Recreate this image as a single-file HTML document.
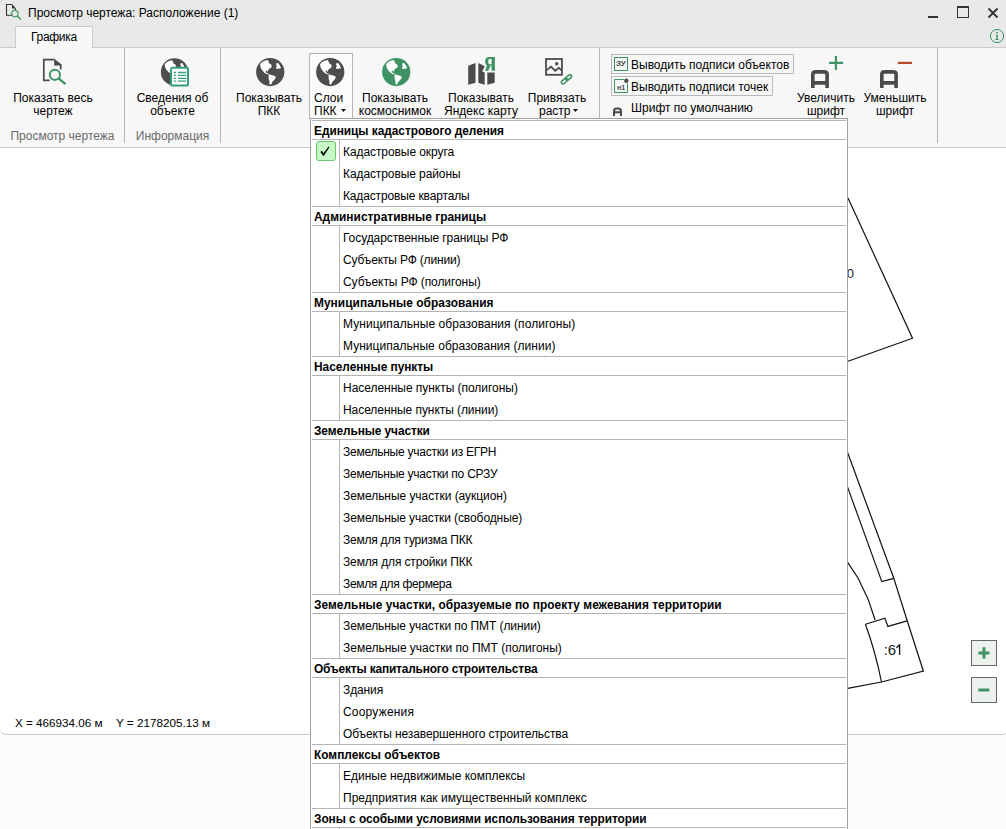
<!DOCTYPE html>
<html><head><meta charset="utf-8">
<style>
*{margin:0;padding:0;box-sizing:border-box}
html,body{width:1006px;height:829px;overflow:hidden;background:#fcfcfc;font-family:"Liberation Sans",sans-serif;color:#000;position:relative}
.a{position:absolute;white-space:nowrap}
#title{position:absolute;left:0;top:0;width:1006px;height:47px;background:#e9e9e9}
#ribbon{position:absolute;left:0;top:47px;width:1006px;height:101px;background:#f7f7f7;border-top:1px solid #cacaca;border-bottom:1px solid #cacaca}
#canvas{position:absolute;left:0;top:148px;width:1008px;height:587px;background:#fff;border-bottom:1px solid #c8c8c8;border-radius:0 0 6px 6px}
.t12{font-size:12px;line-height:13px}
.vsep{position:absolute;width:1px;background:#b2b4ba}
.c{text-align:center}
.grp{color:#6a6a6a}
.tri{width:0;height:0;border-left:2.5px solid transparent;border-right:2.5px solid transparent;border-top:3px solid #111}
#menu{position:absolute;left:310px;top:118px;width:538px;height:720px;background:#fff;border:1px solid #a0a0a0;overflow:hidden}
#menu .sep{position:absolute;left:312px;width:534px;height:1px;background:#b4b4b4}
#menu .col{position:absolute;left:339px;width:1px;background:#b4b4b4}
#menu .hd{left:314px;height:18px;line-height:20px;font-weight:bold;font-size:11.9px}
#menu .it{left:343px;height:22px;line-height:24px;font-size:12px}
</style></head><body>
<div id="title">
  <svg class="a" style="left:0;top:0" width="25" height="25" viewBox="0 0 25 25">
    <path d="M0 0 H2.5 Q0.5 0.5 0 2.5 Z" fill="#fff"/>
    <path d="M0.3 3 Q0.6 0.6 3 0.3" stroke="#d0d0d0" fill="none" stroke-width="1"/>
    <path d="M12.7 15.2 H6.5 V4.5 H12.3" fill="none" stroke="#333" stroke-width="1.1"/>
    <path d="M12 4 L15.9 8.4 H12 Z" fill="#333"/>
    <path d="M15.4 8.3 V10" fill="none" stroke="#333" stroke-width="1.1"/>
    <circle cx="14.9" cy="13.6" r="3.2" fill="none" stroke="#3d9a63" stroke-width="1.2"/>
    <path d="M17.2 16 L20.9 19.5" stroke="#3d9a63" stroke-width="1.4"/>
  </svg>
  <div class="a t12" style="left:28px;top:7px">Просмотр чертежа: Расположение (1)</div>
  <div class="a" style="left:928px;top:16px;width:10px;height:2px;background:#333"></div>
  <div class="a" style="left:957px;top:6px;width:12px;height:12px;border:1px solid #333;border-top-width:2px"></div>
  <svg class="a" style="left:987px;top:7px" width="12" height="12" viewBox="0 0 12 12"><path d="M1.5 1.5 L10.5 10.5 M10.5 1.5 L1.5 10.5" stroke="#333" stroke-width="1.8"/></svg>
  <svg class="a" style="left:989px;top:28px" width="16" height="16" viewBox="0 0 16 16"><circle cx="8" cy="8" r="6.6" fill="none" stroke="#3a9160" stroke-width="1"/><circle cx="8" cy="4.6" r="0.95" fill="#3a9160"/><path d="M6.8 6.6 H8.7 V11 H9.6 V11.9 H6.4 V11 H7.3 V7.4 H6.8 Z" fill="#3a9160"/></svg>
</div>
<div id="ribbon">
  <div class="vsep" style="left:124px;top:0;height:95px"></div>
  <div class="vsep" style="left:220px;top:0;height:95px"></div>
  <div class="vsep" style="left:599px;top:0;height:95px"></div>
  <div class="vsep" style="left:937px;top:0;height:95px"></div>
  <!-- Показать весь чертеж -->
  <svg class="a" style="left:36px;top:6px" width="36" height="36" viewBox="0 0 36 36">
    <path d="M13.7 26.3 H7.8 V5.6 H18.5" fill="none" stroke="#4a4a4a" stroke-width="1.7"/>
    <path d="M18.2 4.8 L25.6 10.6 V11.5 H18.2 Z" fill="#4a4a4a"/>
    <path d="M24.7 10.5 V15.4" fill="none" stroke="#4a4a4a" stroke-width="1.7"/>
    <circle cx="18.9" cy="20.8" r="5.1" fill="none" stroke="#3f9264" stroke-width="2"/>
    <path d="M22.6 24.3 L29.5 30.2" stroke="#3f9264" stroke-width="2.3"/>
  </svg>
  <div class="a t12 c" style="left:-3px;width:112px;top:44px">Показать весь<br>чертеж</div>
  <div class="a t12 c grp" style="left:2px;width:121px;top:82px">Просмотр чертежа</div>
  <!-- Сведения об объекте -->
  <svg class="a" style="left:156px;top:6px" width="36" height="36" viewBox="0 0 829 829">
    <g transform="translate(20 10) scale(0.97)"><use href="#globe"/></g>
  </svg>
  <svg class="a" style="left:156px;top:6px" width="36" height="36" viewBox="0 0 36 36">
    <rect x="15.1" y="13.8" width="16.9" height="17.8" rx="1.2" fill="#fff" stroke="#33a077" stroke-width="2"/>
    <path d="M17.8 18.5 H19.9 M21.9 18.5 H30.2 M17.8 21.4 H19.9 M21.9 21.4 H30.2 M17.8 24.3 H19.9 M21.9 24.3 H30.2 M17.8 27.2 H19.9 M21.9 27.2 H30.2" stroke="#33a077" stroke-width="1.3"/>
  </svg>
  <div class="a t12 c" style="left:124px;width:97px;top:44px">Сведения об<br>объекте</div>
  <div class="a t12 c grp" style="left:124px;width:97px;top:82px">Информация</div>
  <!-- Показывать ПКК -->
  <svg class="a" style="left:252px;top:6px" width="36" height="36" viewBox="0 0 829 829"><use href="#globe"/></svg>
  <div class="a t12 c" style="left:223px;width:92px;top:44px">Показывать<br>ПКК</div>
  <!-- Слои ПКК -->
  <div class="a" style="left:309px;top:5px;width:44px;height:66px;border:1px solid #b2b5be;background:#fbfbfb"></div>
  <svg class="a" style="left:312px;top:6px" width="36" height="36" viewBox="0 0 829 829"><use href="#globe"/></svg>
  <div class="a t12" style="left:314px;top:44px">Слои<br>ПКК</div>
  <svg class="a" style="left:341px;top:61px" width="5" height="3"><path d="M0 0 H5 L2.5 3 Z" fill="#111"/></svg>
  <!-- космоснимок -->
  <svg class="a" style="left:378px;top:6px" width="36" height="36" viewBox="0 0 829 829"><use href="#globeg"/></svg>
  <div class="a t12 c" style="left:349px;width:92px;top:44px">Показывать<br>космоснимок</div>
  <!-- Яндекс -->
  <svg class="a" style="left:456px;top:6px" width="44" height="36" viewBox="0 0 44 36">
    <path d="M12.2 11.8 L19.5 9 V28.7 L12.2 30.8 Z" fill="#4a4a4a"/>
    <path d="M22.3 9 L28.7 12.2 L26.2 17.5 L28.7 18.4 V30.8 L22.3 28.7 Z" fill="#4a4a4a"/>
    <path d="M31.3 18.6 L38.7 18.4 V28.7 L31.3 30.8 Z" fill="#4a4a4a"/>
    <path fill="#3f9264" d="M35.6 3.1 H38.9 V16.8 H35.6 Z M35.6 3.1 H33.2 C30.6 3.1 29.1 4.8 29.1 7.4 C29.1 10 30.6 11.8 33.2 11.8 H35.6 V10.3 H33.6 C32.7 10.3 32.3 9.2 32.3 7.4 C32.3 5.8 32.7 5 33.6 5 H35.6 Z M31 11.3 L34.6 11.6 L32.3 16.8 L29.1 16.8 Z"/>
  </svg>
  <div class="a t12 c" style="left:436px;width:90px;top:44px">Показывать<br>Яндекс карту</div>
  <!-- Привязать растр -->
  <svg class="a" style="left:540px;top:6px" width="40" height="36" viewBox="0 0 40 36">
    <rect x="6" y="5" width="15.9" height="15.8" fill="none" stroke="#4a4a4a" stroke-width="1.8"/>
    <path d="M6.9 16.1 L10.9 12.6 L15.2 16.7 L18.7 13.9 L21.3 16.1" fill="none" stroke="#4a4a4a" stroke-width="1.8"/>
    <circle cx="16.7" cy="9.8" r="1.7" fill="#4a4a4a"/>
    <g transform="rotate(-40 26.5 25.3)" fill="none" stroke="#3f9264" stroke-width="1.6">
      <rect x="20.3" y="23.6" width="6.9" height="3.4" rx="1.7"/>
      <rect x="25.8" y="23.6" width="6.9" height="3.4" rx="1.7"/>
    </g>
  </svg>
  <div class="a t12 c" style="left:514px;width:86px;top:44px">Привязать</div>
  <div class="a t12" style="left:539px;top:57px">растр</div>
  <svg class="a" style="left:573px;top:61px" width="5" height="3"><path d="M0 0 H5 L2.5 3 Z" fill="#111"/></svg>
  <!-- checkbuttons -->
  <div class="a" style="left:611px;top:6px;width:183px;height:20px;border:1px solid #b9b9c0"></div>
  <svg class="a" style="left:612px;top:8px" width="18" height="18" viewBox="0 0 18 18">
    <rect x="2.5" y="1.5" width="13" height="13" fill="none" stroke="#3f9264" stroke-width="1"/>
    <text x="9" y="9.8" text-anchor="middle" style="font-family:'Liberation Sans';font-weight:bold;font-size:8px" fill="#4a4a4a" textLength="10" lengthAdjust="spacingAndGlyphs">ЗУ</text>
  </svg>
  <div class="a t12" style="left:631px;top:11px">Выводить подписи объектов</div>
  <div class="a" style="left:611px;top:28px;width:162px;height:20px;border:1px solid #b9b9c0"></div>
  <svg class="a" style="left:612px;top:30px" width="18" height="18" viewBox="0 0 18 18">
    <path d="M12 1.5 H2.5 V14.5 H15.5 V5.5" fill="none" stroke="#3f9264" stroke-width="1"/>
    <circle cx="14.3" cy="2.8" r="2.2" fill="#4a4a4a"/>
    <text x="9" y="12.2" text-anchor="middle" style="font-family:'Liberation Sans';font-weight:bold;font-size:7px" fill="#4a4a4a">н1</text>
  </svg>
  <div class="a t12" style="left:631px;top:33px">Выводить подписи точек</div>
  <svg class="a" style="left:612px;top:59px" width="12" height="12" viewBox="0 0 12 12">
    <path d="M2 9 V4.2 Q2 1.6 4.6 1.6 H6.4 Q9 1.6 9 4.2 V9 M2 5.2 H9" fill="none" stroke="#4a4a4a" stroke-width="2"/>
  </svg>
  <div class="a t12" style="left:631px;top:54px">Шрифт по умолчанию</div>
  <!-- Увеличить / Уменьшить -->
  <svg class="a" style="left:805px;top:4px" width="42" height="40" viewBox="0 0 42 40">
    <path d="M7.8 36 V22.5 Q7.8 19.9 10.8 19.9 H19.1 Q22.1 19.9 22.1 22.5 V36 M7.8 30.9 H22.1" fill="none" stroke="#4a4a4a" stroke-width="3.6"/>
    <path d="M24.1 10.9 H38.1 M30.9 4.1 V17.9" stroke="#3f9264" stroke-width="2.2"/>
  </svg>
  <div class="a t12 c" style="left:786px;width:80px;top:44px">Увеличить<br>шрифт</div>
  <svg class="a" style="left:874px;top:4px" width="42" height="40" viewBox="0 0 42 40">
    <path d="M7.8 36 V22.5 Q7.8 19.9 10.8 19.9 H19.1 Q22.1 19.9 22.1 22.5 V36 M7.8 30.9 H22.1" fill="none" stroke="#4a4a4a" stroke-width="3.6"/>
    <path d="M23.8 10.9 H38" stroke="#b5492a" stroke-width="2.2"/>
  </svg>
  <div class="a t12 c" style="left:855px;width:80px;top:44px">Уменьшить<br>шрифт</div>
</div>
<div class="a" style="left:15px;top:26px;width:78px;height:22px;background:#f7f7f7;border:1px solid #cbcbcb;border-bottom:none;z-index:2"></div>
<div class="a t12" style="left:31px;top:31px;z-index:3;letter-spacing:-0.3px">Графика</div>
<div id="canvas">
  <svg class="a" style="left:0;top:0" width="1006" height="587" viewBox="0 148 1006 587">
    <g fill="none" stroke="#111" stroke-width="1.2">
      <path d="M848 198 L912.5 338.2 L848 361.2"/>
      <path d="M847.5 452.2 L893.8 578.3 L907.2 620.8 L923.4 671.2 L881.5 682 L847.7 688.4"/>
      <path d="M847.5 486.9 L881.8 581.6 L893.8 578.3"/>
      <path d="M847.5 562.2 L858 578 L868 598.9 L875.1 620"/>
      <path d="M865.4 624.2 L884.9 618.3 L887.9 626.4 L907.2 620.8"/>
      <path d="M865.4 624.2 Q875 650 881.5 682"/>
    </g>
    <text x="846.8" y="278" style="font-family:'Liberation Sans';font-size:13px" fill="#222">0</text>
    <text x="883.7" y="655" style="font-family:'Liberation Sans';font-size:15px" fill="#1a1a1a">:6</text>
    <path d="M899.6 644.2 V655 M896.3 647.6 Q898.6 646.4 899.6 644.2" fill="none" stroke="#1a1a1a" stroke-width="1.35"/>
  </svg>
  <div class="a t12" style="left:15px;top:568px;font-size:11.7px">X = 466934.06 м</div>
  <div class="a t12" style="left:116px;top:568px;font-size:11.7px">Y = 2178205.13 м</div>
  <div class="a" style="left:971px;top:492px;width:26px;height:26px;border:1px solid #666;background:#edf1ee"></div>
  <svg class="a" style="left:971px;top:492px" width="26" height="26" viewBox="0 0 26 26"><path d="M7.3 13 H18.4 M13 7.2 V18.5" stroke="#3f9264" stroke-width="3"/></svg>
  <div class="a" style="left:971px;top:529px;width:26px;height:26px;border:1px solid #666;background:#edf1ee"></div>
  <svg class="a" style="left:971px;top:529px" width="26" height="26" viewBox="0 0 26 26"><path d="M7.3 13 H18.4" stroke="#3f9264" stroke-width="3"/></svg>
</div>
<div id="menu"><div style="position:absolute;left:-311px;top:-119px;width:1006px;height:829px">
  <div class="a" style="left:316px;top:141px;width:20px;height:20px;border:1px solid #6cc46c;background:#c6f9c6;border-radius:3px"></div>
  <svg class="a" style="left:316px;top:141px" width="20" height="20" viewBox="0 0 20 20"><path d="M4.3 10.9 L5.9 9.7 L7.5 12.3 L12.6 5.6 L13.4 6.3 L7.6 15.3 Z" fill="#000"/></svg>
<div class="sep a" style="top:120px"></div>
<div class="hd a" style="top:121px;letter-spacing:-0.039px">Единицы кадастрового деления</div>
<div class="sep a" style="top:139px"></div>
<div class="col a" style="top:140px;height:66px"></div>
<div class="it a" style="top:140px;letter-spacing:-0.078px">Кадастровые округа</div>
<div class="it a" style="top:162px;letter-spacing:-0.094px">Кадастровые районы</div>
<div class="it a" style="top:184px;letter-spacing:-0.145px">Кадастровые кварталы</div>
<div class="sep a" style="top:206px"></div>
<div class="hd a" style="top:207px;letter-spacing:0.025px">Административные границы</div>
<div class="sep a" style="top:225px"></div>
<div class="col a" style="top:226px;height:66px"></div>
<div class="it a" style="top:226px;letter-spacing:-0.081px">Государственные границы РФ</div>
<div class="it a" style="top:248px;letter-spacing:-0.153px">Субъекты РФ (линии)</div>
<div class="it a" style="top:270px;letter-spacing:-0.073px">Субъекты РФ (полигоны)</div>
<div class="sep a" style="top:292px"></div>
<div class="hd a" style="top:293px;letter-spacing:0.052px">Муниципальные образования</div>
<div class="sep a" style="top:311px"></div>
<div class="col a" style="top:312px;height:44px"></div>
<div class="it a" style="top:312px;letter-spacing:0.056px">Муниципальные образования (полигоны)</div>
<div class="it a" style="top:334px;letter-spacing:0.033px">Муниципальные образования (линии)</div>
<div class="sep a" style="top:356px"></div>
<div class="hd a" style="top:357px;letter-spacing:-0.035px">Населенные пункты</div>
<div class="sep a" style="top:375px"></div>
<div class="col a" style="top:376px;height:44px"></div>
<div class="it a" style="top:376px;letter-spacing:-0.032px">Населенные пункты (полигоны)</div>
<div class="it a" style="top:398px;letter-spacing:-0.064px">Населенные пункты (линии)</div>
<div class="sep a" style="top:420px"></div>
<div class="hd a" style="top:421px;letter-spacing:-0.088px">Земельные участки</div>
<div class="sep a" style="top:439px"></div>
<div class="col a" style="top:440px;height:154px"></div>
<div class="it a" style="top:440px;letter-spacing:-0.248px">Земельные участки из ЕГРН</div>
<div class="it a" style="top:462px;letter-spacing:-0.240px">Земельные участки по СРЗУ</div>
<div class="it a" style="top:484px;letter-spacing:-0.056px">Земельные участки (аукцион)</div>
<div class="it a" style="top:506px;letter-spacing:-0.090px">Земельные участки (свободные)</div>
<div class="it a" style="top:528px;letter-spacing:-0.233px">Земля для туризма ПКК</div>
<div class="it a" style="top:550px;letter-spacing:-0.138px">Земля для стройки ПКК</div>
<div class="it a" style="top:572px;letter-spacing:-0.341px">Земля для фермера</div>
<div class="sep a" style="top:594px"></div>
<div class="hd a" style="top:595px;letter-spacing:0.033px">Земельные участки, образуемые по проекту межевания территории</div>
<div class="sep a" style="top:613px"></div>
<div class="col a" style="top:614px;height:44px"></div>
<div class="it a" style="top:614px;letter-spacing:-0.078px">Земельные участки по ПМТ (линии)</div>
<div class="it a" style="top:636px;letter-spacing:-0.009px">Земельные участки по ПМТ (полигоны)</div>
<div class="sep a" style="top:658px"></div>
<div class="hd a" style="top:659px;letter-spacing:-0.162px">Объекты капитального строительства</div>
<div class="sep a" style="top:677px"></div>
<div class="col a" style="top:678px;height:66px"></div>
<div class="it a" style="top:678px;letter-spacing:-0.117px">Здания</div>
<div class="it a" style="top:700px;letter-spacing:0.200px">Сооружения</div>
<div class="it a" style="top:722px;letter-spacing:-0.106px">Объекты незавершенного строительства</div>
<div class="sep a" style="top:744px"></div>
<div class="hd a" style="top:745px;letter-spacing:0.000px">Комплексы объектов</div>
<div class="sep a" style="top:763px"></div>
<div class="col a" style="top:764px;height:44px"></div>
<div class="it a" style="top:764px;letter-spacing:0.000px">Единые недвижимые комплексы</div>
<div class="it a" style="top:786px;letter-spacing:0.005px">Предприятия как имущественный комплекс</div>
<div class="sep a" style="top:808px"></div>
<div class="hd a" style="top:809px;letter-spacing:-0.055px">Зоны с особыми условиями использования территории</div>
<div class="sep a" style="top:827px"></div>
<div class="col a" style="top:828px;height:22px"></div>
<div class="it a" style="top:828px;letter-spacing:-0.055px">Зоны с особыми условиями использования территории</div>
</div></div>
<svg width="0" height="0" style="position:absolute">
  <defs>
    <g id="globeshape" fill="#fff">
      <path d="M185 235 L230 185 L290 155 L355 140 L380 160 L390 200 L405 225 L440 235 L455 300 L430 325 L395 340 L375 370 L360 410 L340 395 L330 370 L315 385 L320 420 L350 445 L400 460 L440 472 L380 472 L330 458 L280 425 L235 375 L200 315 Z"/>
      <path d="M380 482 L450 482 L540 515 L545 545 L520 590 L470 640 L440 700 L405 700 L400 620 L380 560 L385 520 Z"/>
      <path d="M560 215 L600 205 L640 260 L670 330 L600 340 L560 345 L555 300 L575 275 L555 245 Z"/>
    </g>
    <g id="globe"><circle cx="420" cy="415" r="325" fill="#4d4d4d"/><use href="#globeshape"/></g>
    <g id="globeg"><circle cx="420" cy="415" r="325" fill="#3f9264"/><use href="#globeshape"/></g>
  </defs>
</svg>
</body></html>
